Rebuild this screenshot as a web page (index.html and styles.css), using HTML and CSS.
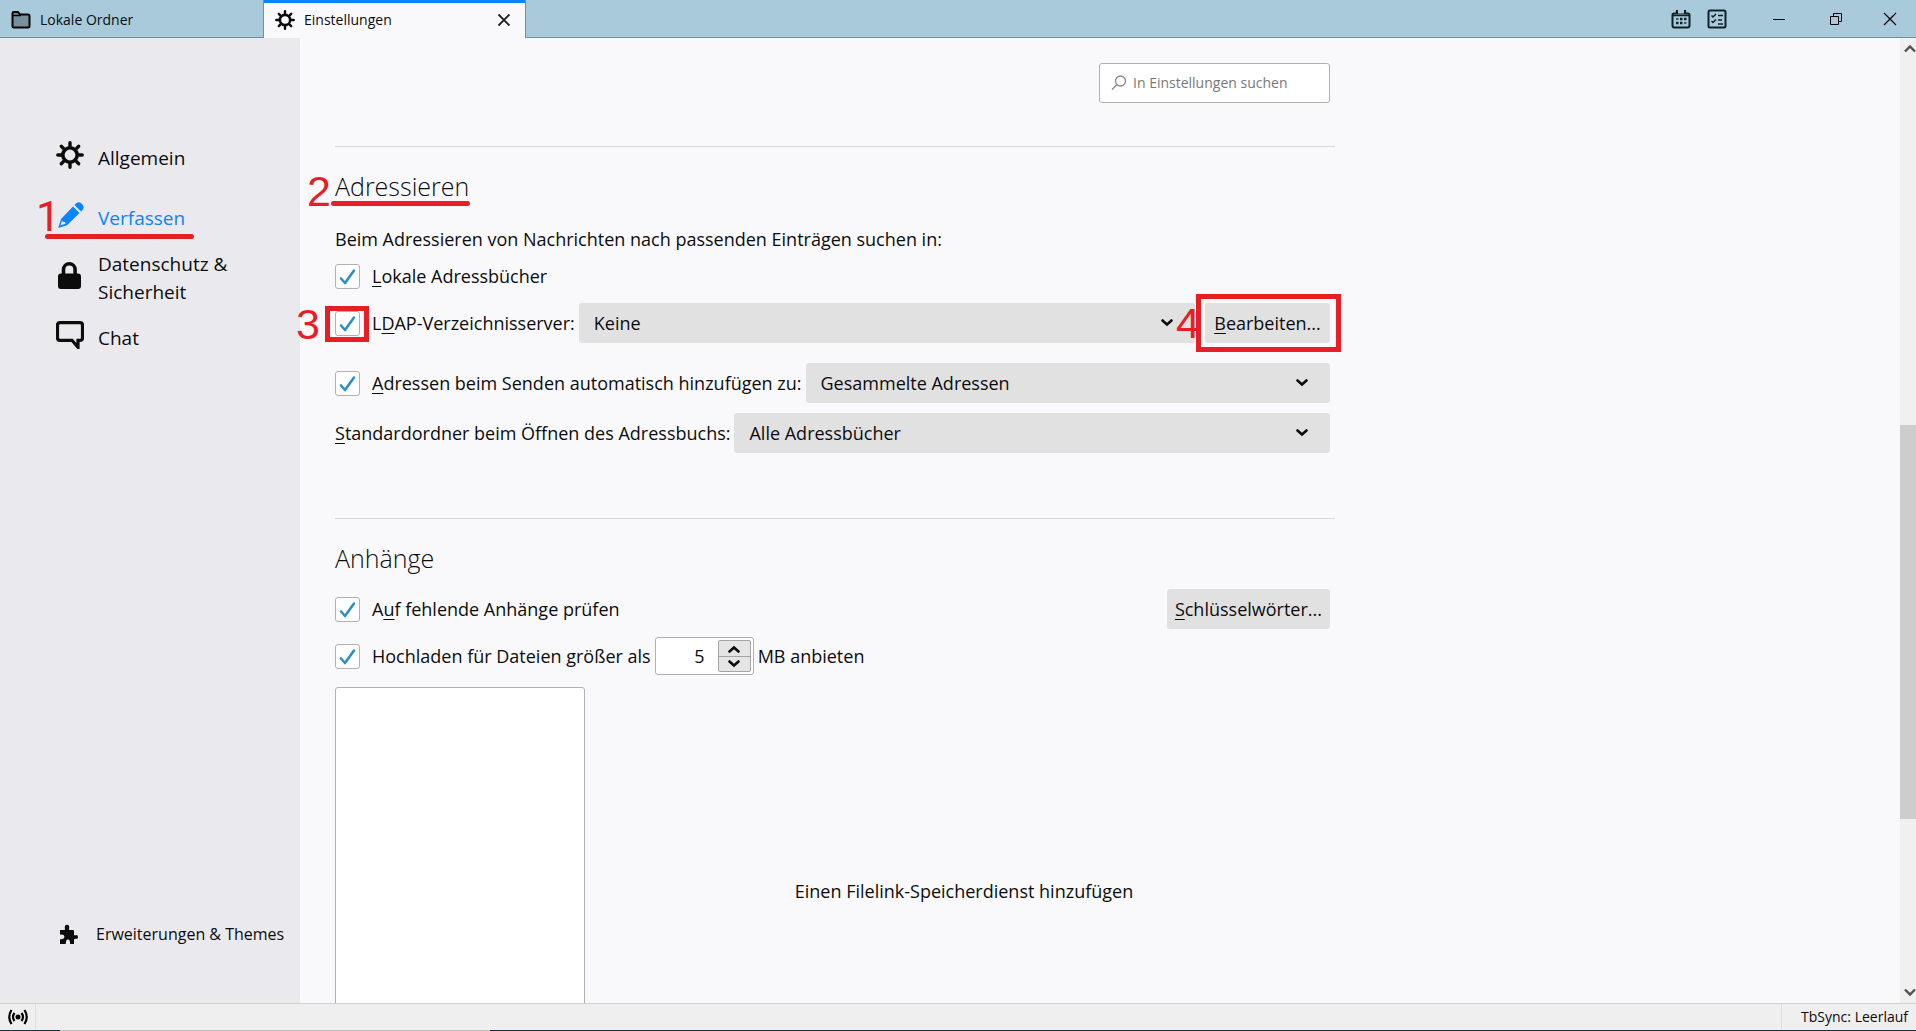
FILE: index.html
```html
<!DOCTYPE html>
<html lang="de">
<head>
<meta charset="utf-8">
<meta name="viewport" content="width=device-width, initial-scale=1">
<title>Einstellungen</title>
<link rel="stylesheet" href="styles.css">
</head>
<body>
<svg class="defs" aria-hidden="true">
  <symbol id="gear" viewBox="0 0 28 28">
    <g fill="none" stroke="currentColor" stroke-linecap="round">
      <circle cx="14" cy="14" r="7.2" stroke-width="3.6"/>
      <path stroke-width="3.4" d="M14 1.8v4M14 22.2v4M1.8 14h4M22.2 14h4M5.3 5.3l2.8 2.8M19.900 19.900l2.800 2.800M5.300 22.700l2.800-2.800M19.900 8.100l2.800-2.800"/>
    </g>
  </symbol>
  <symbol id="chevron" viewBox="0 0 12 8">
    <path d="M1.500 1.500L6 5.500l4.500-4" fill="none" stroke="currentColor" stroke-width="2.600" stroke-linecap="round"/>
  </symbol>
</svg>
<div class="app">
  <header class="titlebar">
    <div class="tabs" role="tablist">
      <button class="tab" role="tab" aria-selected="false">
        <svg class="tab-icon" viewBox="0 0 20 20"><path d="M1.500 16V3.200Q1.500 2 3 2h4l2 2.500h8q1.500 0 1.500 1.500v10q0 1.500-1.500 1.500H3q-1.500 0-1.500-1.500z" fill="#77909c" stroke="#000" stroke-width="2"/><path d="M2 5.500h8" stroke="#000" stroke-width="1.500"/></svg>
        <span>Lokale Ordner</span>
      </button>
      <button class="tab tab-active" role="tab" aria-selected="true">
        <svg class="tab-icon"><use href="#gear"/></svg>
        <span>Einstellungen</span>
        <svg class="tab-close" viewBox="0 0 14 14"><path d="M1.500 1.500l11 11M12.500 1.500l-11 11" stroke="#222" stroke-width="1.800"/></svg>
      </button>
    </div>
    <div class="tools">
      <button class="tool" aria-label="Kalender"><svg viewBox="0 0 20 20"><path d="M3 4.500h14q1.500 0 1.500 1.500v10.500q0 2-2 2h-13q-2 0-2-2V6q0-1.500 1.500-1.500z" fill="none" stroke="#10202a" stroke-width="2"/><path d="M2 6.500h16" stroke="#10202a" stroke-width="1.500"/><path d="M6 1v4M14 1v4" stroke="#10202a" stroke-width="2.200"/><path d="M7 3h6" stroke="#a8cadb" stroke-width="3"/><path d="M9 10h2.500M13 10h2.500M5 14h2.500M9 14h2.500" stroke="#10202a" stroke-width="2.500"/><path d="M5 10h2.500M13 14h2.500" stroke="#405866" stroke-width="2"/></svg></button>
      <button class="tool" aria-label="Aufgaben"><svg viewBox="0 0 20 20"><rect x="1.500" y="1.500" width="17" height="17" rx="1.500" fill="none" stroke="#10202a" stroke-width="2"/><path d="M4.500 6.500L6 8l3-3M4.500 12L6 13.500l3-3M11 6.500h5M11 11h4M11 15h5" fill="none" stroke="#10202a" stroke-width="1.500"/></svg></button>
    </div>
    <div class="window-controls">
      <button aria-label="Minimieren"><svg viewBox="0 0 14 14"><path d="M1 7.500h12" stroke="#000"/></svg></button>
      <button aria-label="Verkleinern"><svg viewBox="0 0 14 14"><path d="M1.500 4.500h8v8h-8zM4.500 4.500v-3h8v8h-3" fill="none" stroke="#000"/></svg></button>
      <button aria-label="Schließen"><svg viewBox="0 0 14 14"><path d="M1 1l12 12M13 1L1 13" stroke="#000" stroke-width="1.200"/></svg></button>
    </div>
  </header>

  <div class="body">
    <aside class="sidebar">
      <nav class="categories">
        <a class="category" href="#allgemein"><svg viewBox="0 0 28 28"><use href="#gear"/></svg><span>Allgemein</span></a>
        <a class="category category-active" href="#verfassen">
          <svg viewBox="0 0 28 28"><path fill="currentColor" fill-rule="evenodd" d="M2.200 27L5 18 17 5.500 23.500 12 11 24.200zM6 19.600l-1.500 4.600 5-1.500-.4-1.800-2.500-.2zM18.500 4l2-2Q22.500.5 25 2l1.500 1.500Q28.500 6 27 8.500l-2 2z"/></svg>
          <span>Verfassen</span>
          <span class="mark-number mark-one">1</span><span class="mark-line mark-line-nav"></span>
        </a>
        <a class="category" href="#datenschutz"><svg viewBox="0 0 28 28"><path d="M7.500 14V8.500a5.800 5.800 0 0 1 11.600 0V14" fill="none" stroke="currentColor" stroke-width="3.600"/><rect x="2" y="12.500" width="23" height="15.500" rx="3" fill="currentColor"/></svg><span>Datenschutz &amp; Sicherheit</span></a>
        <a class="category" href="#chat"><svg viewBox="0 0 28 28"><path d="M4 1.700h20q2.500 0 2.500 2.500v12.600q0 2.500-2.500 2.500h-2v7l-6-7H4q-2.500 0-2.500-2.500V4.200q0-2.500 2.500-2.500z" fill="none" stroke="currentColor" stroke-width="3.200"/></svg><span>Chat</span></a>
      </nav>
      <a class="addons" href="#erweiterungen"><svg viewBox="0 0 18 20"><path fill="currentColor" d="M0 6h4.600q.8-1 .2-2Q4.400 1 7 .8q2.700.2 2.200 3.200-.6 1 .2 2H13q1 0 1 1v4q1 .8 2 .1 2-.1 2 1.900t-2 2q-1-.4-2 .4V20h-3.500q-.8-.5-.4-1.600Q10 15.500 8 15.300q-2 .2-2.200 3.100.4 1.100-.4 1.600H0v-4.500q.8-.8 1.600-.3Q4.300 15 4.500 12.700q0-2-2.600-2.200-1.100.6-1.900-.3z"/></svg><span>Erweiterungen &amp; Themes</span></a>
    </aside>

    <main class="pane">
      <div class="content">
        <div class="search">
          <svg viewBox="0 0 16 16"><circle cx="9.500" cy="6" r="5" fill="none" stroke="#888" stroke-width="1.300"/><path d="M6 9.500L1 14.500" stroke="#888" stroke-width="1.500"/></svg>
          <input type="search" placeholder="In Einstellungen suchen" aria-label="In Einstellungen suchen">
        </div>

        <section class="group addressing">
          <h2><span class="anchor">Adressieren<span class="mark-number mark-two">2</span><span class="mark-line mark-line-heading"></span></span></h2>
          <p>Beim Adressieren von Nachrichten nach passenden Einträgen suchen in:</p>
          <div class="row row-check"><input type="checkbox" id="local" checked><label for="local"><u>L</u>okale Adressbücher</label></div>
          <div class="row row-ldap">
            <span class="anchor"><input type="checkbox" id="ldap" checked><span class="mark-number mark-three">3</span><span class="mark-box mark-box-check"></span></span>
            <label for="ldap">L<u>D</u>AP-Verzeichnisserver:</label>
            <div class="select"><select aria-label="LDAP-Verzeichnisserver"><option>Keine</option></select><svg><use href="#chevron"/></svg></div>
            <span class="anchor"><button class="button"><u>B</u>earbeiten...</button><span class="mark-number mark-four">4</span><span class="mark-box mark-box-button"></span></span>
          </div>
          <div class="row row-auto">
            <input type="checkbox" id="auto" checked><label for="auto"><u>A</u>dressen beim Senden automatisch hinzufügen zu:</label>
            <div class="select"><select aria-label="Adressbuch für neue Adressen"><option>Gesammelte Adressen</option></select><svg><use href="#chevron"/></svg></div>
          </div>
          <div class="row row-default">
            <label for="default"><u>S</u>tandardordner beim Öffnen des Adressbuchs:</label>
            <div class="select"><select id="default"><option>Alle Adressbücher</option></select><svg><use href="#chevron"/></svg></div>
          </div>
        </section>

        <section class="group attachments">
          <h2>Anhänge</h2>
          <div class="row row-missing"><input type="checkbox" id="missing" checked><label for="missing">A<u>u</u>f fehlende Anhänge prüfen</label><button class="button push"><u>S</u>chlüsselwörter...</button></div>
          <div class="row row-upload">
            <input type="checkbox" id="upload" checked><label for="upload">Hochladen für Dateien größer als</label>
            <div class="number"><input type="text" inputmode="numeric" value="5" aria-label="Größe in MB">
              <div class="spin"><button aria-label="Erhöhen"><svg class="flip"><use href="#chevron"/></svg></button><button aria-label="Verringern"><svg><use href="#chevron"/></svg></button></div>
            </div>
            <span>MB anbieten</span>
          </div>
          <div class="filelink"><div class="provider-list"></div><p>Einen Filelink-Speicherdienst hinzufügen</p></div>
        </section>
      </div>
    </main>
    <div class="scrollbar" aria-hidden="true">
      <svg viewBox="0 0 12 8"><path d="M1 6.500l5-5 5 5" fill="none" stroke="#505050" stroke-width="2.400"/></svg>
      <div class="track"><div class="thumb"></div></div>
      <svg viewBox="0 0 12 8"><path d="M1 1.500l5 5 5-5" fill="none" stroke="#505050" stroke-width="2.400"/></svg>
    </div>
  </div>

  <footer class="statusbar">
    <div class="status-online"><svg viewBox="0 0 20 16"><circle cx="10" cy="8" r="2.500"/><path d="M6.500 4Q3.500 8 6.500 12M13.500 4q3 4 0 8M3.500 1q-4.500 7 0 14M16.500 1q4.500 7 0 14" fill="none" stroke="#000" stroke-width="2.200"/></svg></div>
    <div class="status-sync">TbSync: Leerlauf</div>
  </footer>
</div>
</body>
</html>
```
FILE: styles.css
```css
* { box-sizing: border-box; }

body {
  margin: 0;
  font: 18px/24px "Open Sans", "Noto Sans", sans-serif;
  color: #0c0c0d;
  background: #f9f9fb;
}

button, input, select { font: inherit; color: inherit; }
button { padding: 0; border: 0; background: none; }
svg { display: block; flex: none; }
a { color: inherit; text-decoration: none; }
u { text-underline-offset: 3px; text-decoration-thickness: 1px; text-decoration-skip-ink: none; }
.defs { display: none; }

.app { display: flex; flex-direction: column; height: 100vh; overflow: hidden; }

/* Tab strip */
.titlebar {
  display: flex;
  flex: none;
  height: 38px;
  background: #a8cadb;
  box-shadow: inset 0 -1px #7290a5;
}
.tabs { display: flex; margin-right: auto; }
.tab {
  display: flex;
  align-items: center;
  gap: 9px;
  width: 263px;
  padding: 2px 14px 0 11px;
  font-size: 14px;
}
.tab-active {
  background: #f9f9fb;
  border: solid #7290a5;
  border-width: 0 1px;
  box-shadow: inset 0 3px #0a84ff;
}
.tab-icon { width: 20px; height: 20px; }
.tab-close { width: 14px; height: 14px; margin-left: auto; }
.tools { display: flex; align-items: center; gap: 16px; margin-right: 23px; }
.tool svg { width: 20px; height: 20px; }
.window-controls { display: flex; }
.window-controls button { display: grid; place-items: center; width: 57px; }
.window-controls button:last-child { width: 52px; }
.window-controls svg { width: 14px; height: 14px; }

/* Main area */
.body { display: flex; flex: 1; min-height: 0; overflow: hidden; }
.sidebar {
  display: flex;
  flex: none;
  flex-direction: column;
  justify-content: space-between;
  width: 300px;
  padding: 87px 0 57px 56px;
  background: #eaeaee;
}
.categories { font-size: 19px; line-height: 28px; }
.category {
  position: relative;
  display: flex;
  align-items: center;
  gap: 14px;
  height: 60px;
}
.category svg { width: 28px; height: 28px; }
.category > span:not([class]) { width: 150px; padding-top: 6px; }
.category-active { color: #0a84ff; }
.addons { display: flex; align-items: center; gap: 18px; padding-left: 4px; font-size: 16px; }
.addons svg { width: 18px; height: 20px; }

.pane { flex: 1; min-width: 0; }
.content { max-width: 1035px; height: 100%; padding: 25px 0 0 35px; }
.search {
  display: flex;
  align-items: center;
  gap: 6px;
  width: 231px;
  height: 40px;
  margin: 0 5px 43px auto;
  padding: 0 11px;
  background: #fff;
  border: 1px solid #b1b1b3;
  border-radius: 3px;
}
.search svg { width: 16px; height: 16px; }
.search input { width: 100%; min-width: 0; padding: 0; border: 0; outline: 0; background: none; font-size: 14px; }
.search input::placeholder { color: #777; opacity: 1; }

.group { border-top: 1px solid #d7d7db; padding-top: 22px; }
h2 { margin: 0; font-size: 25px; line-height: 34px; font-weight: 300; }
p { margin: 0; }
.addressing { height: 372px; }
.addressing p { margin-top: 24px; }
.anchor { position: relative; display: inline-flex; }
.row { display: flex; align-items: center; height: 40px; padding-right: 5px; white-space: nowrap; }
.row-check { margin-top: 5px; }
.row-ldap { margin-top: 7px; }
.row-auto { margin-top: 20px; }
.row-default { margin-top: 10px; }
.row-missing { margin-top: 14px; }
.row-upload { margin-top: 7px; }
label { margin-right: 4px; }

input[type="checkbox"] {
  appearance: none;
  flex: none;
  width: 25px;
  height: 25px;
  margin: 0 12px 0 0;
  border: 1px solid #b1b1b3;
  border-radius: 3px;
  background: #fff;
}
input[type="checkbox"]:checked {
  background: #fff url("data:image/svg+xml,%3Csvg xmlns='http://www.w3.org/2000/svg' viewBox='0 0 23 23'%3E%3Cpath d='M5 13.500L9 18L18 5.500' fill='none' stroke='%232b8fc9' stroke-width='2.600' stroke-linecap='round' stroke-linejoin='round'/%3E%3C/svg%3E") center / 23px;
}

.select { position: relative; flex: 1; min-width: 0; }
.select select {
  appearance: none;
  display: block;
  width: 100%;
  height: 40px;
  padding: 0 15px;
  border: 0;
  border-radius: 3px;
  background: #e1e1e2;
}
.select svg {
  position: absolute;
  top: 16px;
  right: 22px;
  width: 12px;
  height: 8px;
  pointer-events: none;
}
.button { height: 40px; padding: 0 8px; border-radius: 3px; background: #e1e1e2; }
.row-ldap .button { width: 125px; margin-left: 10px; }
.push { margin-left: auto; }
.number {
  display: flex;
  width: 99px;
  height: 38px;
  margin-right: 4px;
  padding: 2px;
  border: 1px solid #b1b1b3;
  border-radius: 3px;
  background: #fff;
}
.number input { flex: 1; min-width: 0; padding: 0 13px 0 0; border: 0; background: none; text-align: right; }
.spin { display: grid; grid-template-rows: 1fr 1fr; width: 33px; border: 1px solid #a5a5a7; border-radius: 2px; background: #e5e5e5; }
.spin button { display: grid; place-items: center; }
.spin button + button { border-top: 1px solid #a5a5a7; }
.spin svg { width: 12px; height: 8px; }
.flip { transform: rotate(180deg); }

.filelink { display: grid; grid-template-columns: 250px 1fr; margin-top: 11px; }
.provider-list { height: 408px; border: 1px solid #b1b1b3; border-radius: 3px; background: #fff; }
.filelink p { align-self: center; padding-left: 8px; text-align: center; }

/* Scrollbar */
.scrollbar { display: flex; flex: none; flex-direction: column; align-items: flex-end; width: 16px; padding: 7px 0; background: #f0f0f0; }
.scrollbar svg { width: 12px; height: 8px; }
.track { flex: 1; width: 16px; padding-top: 372px; }
.thumb { height: 394px; background: #cdcdcd; }

/* Status bar */
.statusbar {
  display: flex;
  flex: none;
  justify-content: space-between;
  height: 28px;
  background: linear-gradient(90deg, #1d3340 60px, #bebebe 60px 490px, #1d2c40 490px) bottom / 100% 1px no-repeat #efefef;
  border-top: 1px solid #d0d2d2;
  font-size: 14px;
}
.status-online, .status-sync { display: flex; align-items: center; height: 25px; }
.status-online { width: 36px; padding-left: 8px; border-right: 1px solid #e0e0e0; }
.status-online svg { width: 20px; height: 16px; }
.status-sync { padding: 0 8px 0 19px; border-left: 1px solid #dcdcdc; }

/* Red annotations laid over the settings page */
.mark-number, .mark-line, .mark-box { position: absolute; z-index: 2; color: #e81e25; pointer-events: none; }
.mark-number { font: 43px/44px "Liberation Sans", Arial, sans-serif; }
.mark-line { height: 5px; border-radius: 3px; background: currentColor; }
.mark-box { border: 5px solid; }
.mark-one { left: -20px; top: 9px; font-family: Roboto, sans-serif; }
.mark-line-nav { left: -11px; top: 49px; width: 149px; }
.mark-two { left: -28px; top: 0; }
.mark-line-heading { left: -4px; right: -1px; bottom: -3px; }
.mark-three { left: -39px; top: -9px; }
.mark-box-check { left: -10px; top: -5px; width: 44px; height: 36px; }
.mark-four { left: -19px; top: -2px; }
.mark-box-button { inset: -9px -11px -9px 1px; }
```
